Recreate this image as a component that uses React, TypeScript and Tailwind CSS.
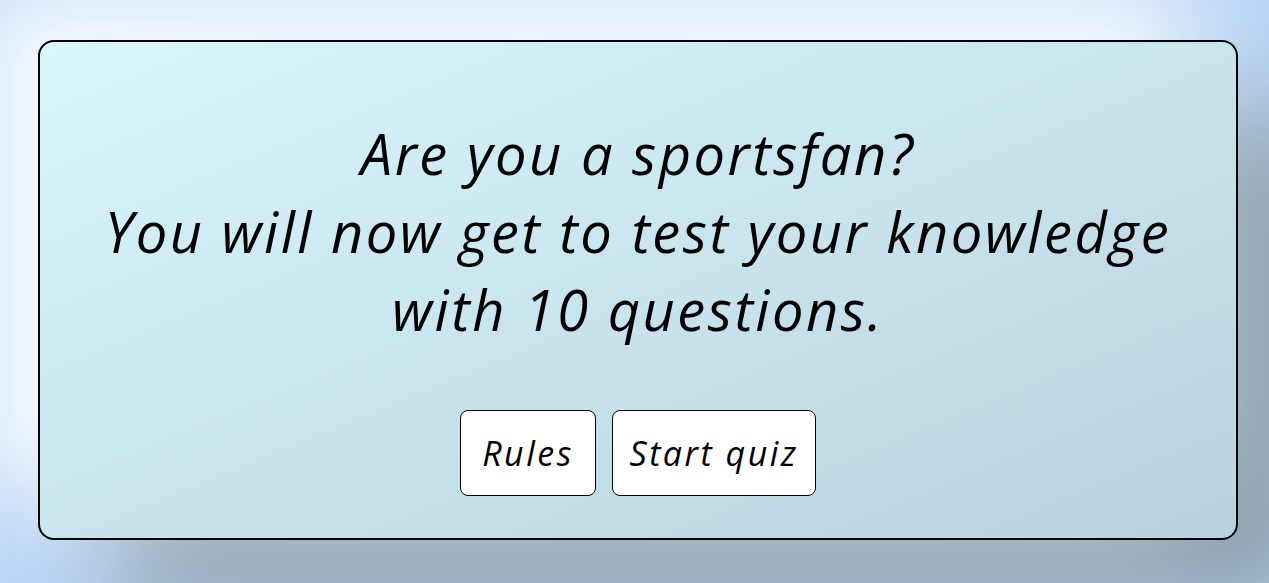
export default function App() {
  return (
    <div className="min-h-screen w-full bg-[#bad5f6] flex items-start pl-[38px] pt-[40px] overflow-hidden">
      {/* Quiz intro card */}
      <div
        className="
          w-[1200px] h-[500px] shrink-0
          rounded-2xl border-2 border-black
          bg-gradient-to-br from-[#d9f6fc] to-[#b8d2df]
          shadow-[-60px_-50px_100px_10px_#f4f9ff,80px_70px_100px_#8ca0ae]
          flex flex-col items-center
          pt-[72px]
          font-['Open_Sans',sans-serif] italic text-black
        "
      >
        <h1 className="text-[56px] leading-[78px] tracking-[2.5px] font-medium text-center">
          Are you a sportsfan?
          <br />
          You will now get to test your knowledge
          <br />
          with 10 questions.
        </h1>

        <div className="mt-[62px] flex gap-4">
          <button className="w-[136px] h-[86px] text-[34px] tracking-[2.5px] bg-white border-[1.5px] border-black rounded-lg">
            Rules
          </button>
          <button className="w-[204px] h-[86px] text-[34px] tracking-[2.5px] bg-white border-[1.5px] border-black rounded-lg">
            Start quiz
          </button>
        </div>
      </div>
    </div>
  );
}
